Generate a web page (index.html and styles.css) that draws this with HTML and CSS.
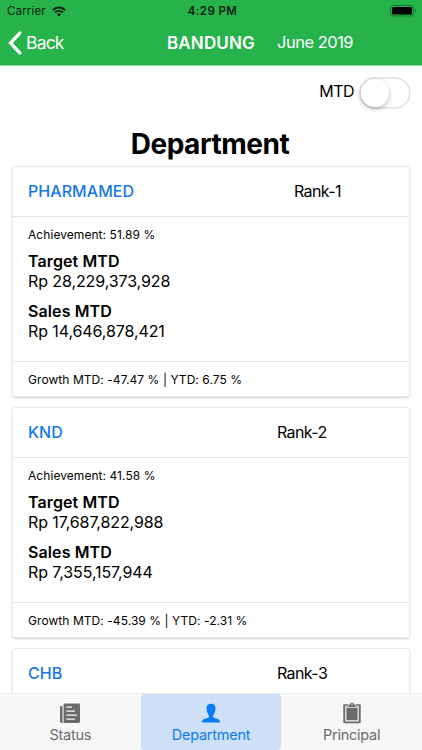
FILE: index.html
```html
<!DOCTYPE html>
<html lang="en">
<head>
<meta charset="utf-8">
<title>Department</title>
<link rel="stylesheet" href="styles.css">
</head>
<body>
<div class="app">
  <header class="header">
    <div class="statusbar">
      <div class="carrier"><span>Carrier</span>
        <svg width="14" height="11" viewBox="0 0 14 11"><g fill="none" stroke="#071d0c" stroke-width="1.9"><path d="M.8 4.1a8.8 8.8 0 0 1 12.4 0"/><path d="M3 6.5a5.7 5.7 0 0 1 8 0"/></g><path d="M7 10.4 4.9 8.2a3 3 0 0 1 4.2 0z" fill="#071d0c"/></svg>
      </div>
      <span class="clock">4:29 PM</span>
      <svg class="battery" width="27" height="12" viewBox="0 0 27 12"><rect x="1.5" y=".5" width="23" height="10.4" rx="2.4" fill="none" stroke="#177431"/><rect x="3" y="2" width="20" height="7.4" rx="1.2" fill="#000"/><path d="M26 4v3.600c1.500-.6 1.500-3 0-3.600z" fill="#177431"/></svg>
    </div>
    <nav class="navbar">
      <svg width="14" height="24" viewBox="0 0 14 24"><path d="M11.800 2.100 2.500 12l9.300 9.900" fill="none" stroke="#fff" stroke-width="3.300" stroke-linecap="round"/></svg>
      <span class="back">Back</span>
      <b class="branch">BANDUNG</b>
      <span class="month">June 2019</span>
    </nav>
  </header>
  <main class="content">
    <div class="toggle"><span class="toggle-label">MTD</span><span class="switch"><i class="knob"></i></span></div>
    <h1>Department</h1>
    <section class="card">
      <div class="card-head"><span class="name name-pharmamed">PHARMAMED</span><span class="rank">Rank-1</span></div>
      <div class="card-body">
        <p class="small achievement">Achievement: 51.89 %</p>
        <p class="metric"><b>Target MTD</b><span>Rp 28,229,373,928</span></p>
        <p class="metric"><b>Sales MTD</b><span>Rp 14,646,878,421</span></p>
      </div>
      <div class="card-foot small">Growth MTD: -47.47 % | YTD: 6.75 %</div>
    </section>
    <section class="card">
      <div class="card-head"><span class="name">KND</span><span class="rank">Rank-2</span></div>
      <div class="card-body">
        <p class="small achievement">Achievement: 41.58 %</p>
        <p class="metric"><b>Target MTD</b><span>Rp 17,687,822,988</span></p>
        <p class="metric"><b>Sales MTD</b><span>Rp 7,355,157,944</span></p>
      </div>
      <div class="card-foot small">Growth MTD: -45.39 % | YTD: -2.31 %</div>
    </section>
    <section class="card">
      <div class="card-head"><span class="name">CHB</span><span class="rank">Rank-3</span></div>
      <div class="card-body"></div>
    </section>
  </main>
  <footer class="tabs">
    <div class="tab">
      <svg width="22" height="22" viewBox="0 0 22 22"><path d="M6 1.500h14q1 0 1 1v17q0 1.400-1.400 1.400H6q-1.400 0-1.400-1.400v-17q0-1 1.400-1z" fill="#6b6b6b"/><path d="M3.500 4H2Q1 4 1 5v14q0 1.900 1.900 1.900h1.600q-1-.5-1-1.900z" fill="#6b6b6b"/><path d="M7.300 5.200H13M7.300 9.200H16M7.300 13.200H18M7.300 17.200H16" stroke="#f7f7f7" stroke-width="1.300"/></svg>
      <span>Status</span>
    </div>
    <div class="tab active">
      <svg width="22" height="22" viewBox="0 0 22 22"><path d="M11 1.700c3 0 4.500 1.800 4.500 4.600 0 2.700-.9 4.800-2 6.500-.8 1.200-.5 2.700.3 3l3.200 1c2 .6 2.900 1.200 3.200 3.700H1.800c.3-2.500 1.200-3.100 3.200-3.700l3.200-1c.8-.3 1.100-1.800.3-3-1.100-1.700-2-3.800-2-6.500 0-2.800 1.500-4.600 4.500-4.600z" fill="#0a7bf5"/></svg>
      <span>Department</span>
    </div>
    <div class="tab">
      <svg width="22" height="22" viewBox="0 0 22 22"><rect x="2.300" y="2.200" width="17.400" height="19" rx="1" fill="#6b6b6b"/><path d="M4.800 4.400h12.400v14.400H4.800z" fill="#6b6b6b" stroke="#f7f7f7" stroke-width="1.200"/><path d="M6 5.400c0-1.500.8-2.400 2.100-2.600C8.900 2.600 9 .5 11 .5s2.100 2.100 2.900 2.300c1.300.2 2.100 1.100 2.100 2.600z" fill="#6b6b6b" stroke="#f7f7f7" stroke-width=".8"/><circle cx="11" cy="2.600" r=".7" fill="#f7f7f7"/></svg>
      <span>Principal</span>
    </div>
  </footer>
</div>
</body>
</html>
```
FILE: styles.css
```css
* { box-sizing: border-box; }
body { margin: 0; font: 16px/20px Inter, "Liberation Sans", sans-serif; color: #000; background: #fff; }
svg { display: block; flex: none; }
.app { width: 422px; height: 750px; display: flex; flex-direction: column; overflow: hidden; }
.header { flex: none; height: 66px; background: #27b34b; border-bottom: 1px solid #8ddc9f; }
.statusbar { height: 22px; padding: 0 6px 0 7px; display: grid; grid-template-columns: 1fr auto 1fr; align-items: center; color: #071d0c; font-size: 11.500px; line-height: 22px; }
.carrier { display: flex; gap: 6px; align-items: center; letter-spacing: .15px; }
.clock { font-weight: 600; letter-spacing: .4px; padding-left: 2px; }
.battery { justify-self: end; }
.navbar { height: 41px; padding-left: 8px; display: flex; align-items: center; color: #fff; }
.back { width: 141px; padding-left: 4px; font-size: 17.500px; letter-spacing: -.8px; }
.branch { width: 110px; margin-left: 4px; font-size: 17px; font-weight: 600; letter-spacing: .15px; }
.month { font-size: 16.500px; letter-spacing: -.5px; padding-bottom: 2px; }
.content { flex: 1; min-height: 0; overflow: hidden; padding: 10px 12px 0; }
.toggle { height: 33px; display: flex; justify-content: flex-end; align-items: center; gap: 5px; margin-right: -1px; }
.toggle-label { letter-spacing: -.5px; padding-bottom: 3px; }
.switch { width: 52px; height: 32px; border: 2px solid #e6e6e6; border-radius: 16px; }
.knob { display: block; width: 28px; height: 28px; border-radius: 50%; background: #fff; box-shadow: 0 2px 5px rgba(0,0,0,.27); }
h1 { margin: 18px 0 5px; font-size: 28px; line-height: 34px; font-weight: 700; text-align: center; letter-spacing: -.45px; padding-right: 2px; }
.card { height: 231px; margin-bottom: 10px; border: 1px solid #ebebeb; border-radius: 3px; box-shadow: 0 1px 2px rgba(0,0,0,.2); display: flex; flex-direction: column; }
.card-head { height: 50px; padding: 0 15px 2px; border-bottom: 1px solid #e6e6e6; display: flex; align-items: center; flex: none; }
.name { color: #1677e6; font-weight: 500; width: 249px; letter-spacing: .05px; }
.name-pharmamed { width: 266px; }
.rank { letter-spacing: -.6px; }
.card-body { flex: 1; padding: 8px 15px 0; }
p { margin: 0 0 10px; }
.small { font-size: 12px; letter-spacing: .06px; }
.achievement { margin-bottom: 6px; }
.metric { display: flex; flex-direction: column; }
.metric b { font-weight: 600; letter-spacing: .1px; }
.metric span { letter-spacing: -.1px; }
.card-foot { height: 35px; line-height: 35px; padding: 0 15px; border-top: 1px solid #e8e8e8; white-space: nowrap; }
.tabs { flex: none; height: 57px; border-top: 1px solid #ededed; background: #f7f7f7; display: grid; grid-template-columns: repeat(3, 1fr); color: #6b6b6b; font-size: 14.500px; letter-spacing: -.25px; }
.tab { display: flex; flex-direction: column; align-items: center; padding-top: 8px; gap: 1px; border-radius: 4px; }
.active { background: #cde0f8; color: #0a7bf5; }
```
